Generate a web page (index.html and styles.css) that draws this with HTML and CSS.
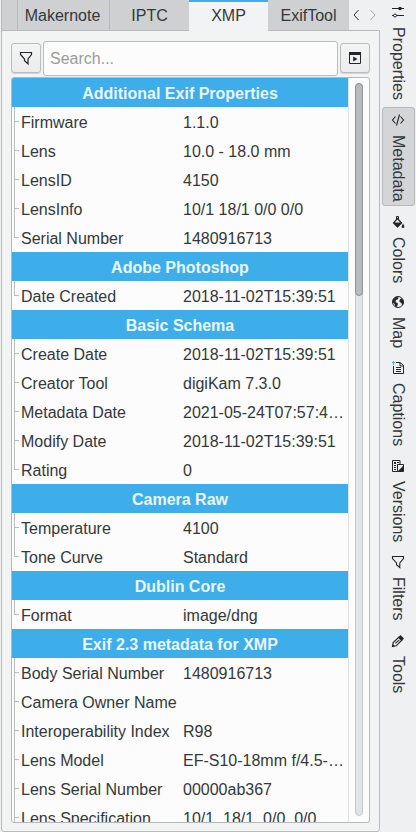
FILE: index.html
```
<!DOCTYPE html>
<html lang="en">
<head>
<meta charset="utf-8">
<title>Metadata</title>
<link rel="stylesheet" href="styles.css">
</head>
<body>
<main class="panel">
  <nav class="tabs">
    <span class="tab stub"></span>
    <span class="tab makernote">Makernote</span>
    <span class="tab iptc">IPTC</span>
    <span class="tab xmp active">XMP</span>
    <span class="tab exiftool">ExifTool</span>
    <span class="arrows">
      <svg width="30" height="14" viewBox="0 0 30 14" fill="none"><path d="M9.500 2 5 7l4.500 5" stroke="#333"/><path d="M21.500 2 26 7l-4.500 5" stroke="#aaa"/></svg>
    </span>
  </nav>
  <section class="page">
    <div class="toolbar">
      <button class="tool"><svg width="16" height="16" viewBox="0 0 16 16" fill="none" stroke="#232629" stroke-width="1.200"><path d="M2.500 2.500h11v2L10 9v5l-3.500-3.200V9L2.500 4.500z"/></svg></button>
      <div class="search">Search...</div>
      <button class="tool"><svg width="14" height="14" viewBox="0 0 14 14"><path d="M1.500 1.500h11v11h-11z" fill="none" stroke="#232629"/><path d="M1 1h12v3H1zM5.200 5.500v5L9.500 8z" fill="#232629"/></svg></button>
    </div>
    <div class="list">
      <div class="rows">
        <h2>Additional Exif Properties</h2>
        <dl>
          <div><dt>Firmware</dt><dd>1.1.0</dd></div>
          <div><dt>Lens</dt><dd>10.0 - 18.0 mm</dd></div>
          <div><dt>LensID</dt><dd>4150</dd></div>
          <div><dt>LensInfo</dt><dd>10/1 18/1 0/0 0/0</dd></div>
          <div><dt>Serial Number</dt><dd>1480916713</dd></div>
        </dl>
        <h2>Adobe Photoshop</h2>
        <dl>
          <div><dt>Date Created</dt><dd>2018-11-02T15:39:51</dd></div>
        </dl>
        <h2>Basic Schema</h2>
        <dl>
          <div><dt>Create Date</dt><dd>2018-11-02T15:39:51</dd></div>
          <div><dt>Creator Tool</dt><dd>digiKam 7.3.0</dd></div>
          <div><dt>Metadata Date</dt><dd>2021-05-24T07:57:4…</dd></div>
          <div><dt>Modify Date</dt><dd>2018-11-02T15:39:51</dd></div>
          <div><dt>Rating</dt><dd>0</dd></div>
        </dl>
        <h2>Camera Raw</h2>
        <dl>
          <div><dt>Temperature</dt><dd>4100</dd></div>
          <div><dt>Tone Curve</dt><dd>Standard</dd></div>
        </dl>
        <h2>Dublin Core</h2>
        <dl>
          <div><dt>Format</dt><dd>image/dng</dd></div>
        </dl>
        <h2>Exif 2.3 metadata for XMP</h2>
        <dl class="continues">
          <div><dt>Body Serial Number</dt><dd>1480916713</dd></div>
          <div><dt>Camera Owner Name</dt><dd></dd></div>
          <div><dt>Interoperability Index</dt><dd>R98</dd></div>
          <div><dt>Lens Model</dt><dd>EF-S10-18mm f/4.5-…</dd></div>
          <div><dt>Lens Serial Number</dt><dd>00000ab367</dd></div>
          <div><dt>Lens Specification</dt><dd>10/1&nbsp; 18/1&nbsp; 0/0&nbsp; 0/0</dd></div>
        </dl>
      </div>
      <div class="scroll"><div class="track"><div class="thumb"></div></div></div>
    </div>
  </section>
</main>
<aside class="side">
  <div class="stab properties"><svg viewBox="0 0 14 14" stroke="#232629"><path d="M1 3.500h12M1 10.500h12"/><circle cx="9" cy="3.500" r="1.800" fill="#232629" stroke="none"/><circle cx="4" cy="10.500" r="1.500" fill="#eff0f1"/></svg><span>Properties</span></div>
  <div class="stab metadata active"><svg viewBox="0 0 14 14" fill="none" stroke="#232629" stroke-width="1.100"><path d="M4.500 3.500 1.500 7l3 3.500M9.500 3.500l3 3.500-3 3.500M8.500 1.500l-3 11"/></svg><span>Metadata</span></div>
  <div class="stab colors"><svg viewBox="0 0 14 14"><path d="M5.500 4.500V1.500h2v3" fill="none" stroke="#232629"/><path d="M6.500 3.500 10.500 8l-4 4-4-4z" fill="none" stroke="#232629" stroke-width="1.200"/><path d="M2 7.500h9l-4.500 5zM12 8.500q2.700 4.500 0 4.500t0-4.500z" fill="#232629"/></svg><span>Colors</span></div>
  <div class="stab map"><svg viewBox="0 0 14 14"><circle cx="7" cy="7" r="5.500" fill="none" stroke="#232629"/><path d="M2 4.500 4.500 2l3 .2-.5 2L5 5l-.5 2L7 8.500l-.8 3L4.500 12 3.500 9 1.500 7zM8.500 5l2-2 2 3v3L11 10.500 10.500 8 8.500 7z" fill="#232629"/></svg><span>Map</span></div>
  <div class="stab captions"><svg viewBox="0 0 14 14" fill="none" stroke="#232629"><path d="M5 1.500h4l3.500 3v8h-10V5M9 1.500V5h3.500" /><path d="M5 6.500h5M5 8.500h5M5 10.500h5"/><path d="M1 1.500h3M2.500 0v4" stroke="#3daee9"/></svg><span>Captions</span></div>
  <div class="stab versions"><svg viewBox="0 0 14 14"><path d="M1.500 1.500h7.500v4M9 5.500h-2.500v7H1.500v-11" fill="none" stroke="#232629"/><path d="M6.500 5.500h6v7h-6z" fill="#eff0f1" stroke="#232629"/><path d="M3 3h2v2H3zM6 3h2v1H6zM3 6h2v1H3zM3 8h2v1H3zM3 10h2v1H3zM7 12l5-5v5z" fill="#232629"/></svg><span>Versions</span></div>
  <div class="stab filters"><svg viewBox="0 0 14 14" fill="none" stroke="#232629" stroke-width="1.100"><path d="M1.500 1.500h11v2L8.800 8v4.500L5.500 9.700V8l-4-4.500z"/></svg><span>Filters</span></div>
  <div class="stab tools"><svg viewBox="0 0 14 14"><path d="m1.500 12.500.7-4L8 3l3 3-5.800 5.800z" fill="none" stroke="#232629" stroke-width="1.200"/><path d="M7 3.500 9.500 1 13 4.500 10.500 7zM1 13l.7-3 2.300 2.300zM4 9l4-3.500.7.7-4 3.500z" fill="#232629"/></svg><span>Tools</span></div>
</aside>
</body>
</html>
```
FILE: styles.css
```
* { box-sizing: border-box; }
html, body { height: 100%; }
body {
  margin: 0;
  display: flex;
  overflow: hidden;
  background: #eff0f1;
  color: #34383b;
  font: 16px/29px "Liberation Sans", Arial, sans-serif;
}
.panel { width: 380px; height: 832px; padding-left: 1px; display: flex; flex-direction: column; }
.tabs { height: 31px; display: flex; flex: none; position: relative; z-index: 1; }
.tab {
  height: 31px;
  line-height: 31px;
  text-align: center;
  background: #ced0d2;
  border-right: 1px solid #b8babc;
  border-bottom: 1px solid #b8babc;
}
.stub { width: 17px; border-left: 1px solid #b8babc; }
.makernote { width: 92px; padding-right: 2px; }
.iptc { width: 79px; border-right: 0; }
.tab.active { width: 79px; background: #f2f3f4; border: 0; border-top: 2px solid #3daee9; line-height: 27px; }
.exiftool { width: 81px; border-right: 0; }
.arrows { flex: 1; padding: 8px 0 0; line-height: 0; overflow: hidden; }
.page {
  flex: none;
  height: 802px;
  width: 379px;
  margin-top: -1px;
  padding: 9px 9px 8px;
  border: 1px solid #b8babc;
  border-radius: 0 0 3px 3px;
  background: #f2f3f3;
}
.toolbar { display: flex; align-items: center; gap: 2px; height: 36px; }
.tool {
  flex: none;
  width: 30px;
  height: 30px;
  padding: 0;
  display: flex;
  align-items: center;
  justify-content: center;
  border: 1px solid #b9bbbd;
  border-radius: 3px;
  background: linear-gradient(#f3f4f4, #ececed);
  box-shadow: 0 1px 0 #d4d5d6;
}
.search {
  flex: 1;
  height: 35px;
  padding-left: 6px;
  line-height: 33px;
  background: #fcfcfc;
  border: 1px solid #b9bbbd;
  border-radius: 3px;
  color: #999b9d;
}
.list {
  display: flex;
  height: 746px;
  width: 359px;
  margin-top: 1px;
  border: 1px solid #b6b8ba;
  border-radius: 3px;
  background: #fcfcfc;
  overflow: hidden;
}
.rows { width: 337px; border-right: 1px solid #e0e1e2; }
h2 {
  margin: 0;
  height: 29px;
  background: #3daee9;
  color: #eaf6fd;
  font-size: 16px;
  line-height: 32px;
  text-align: center;
}
dl { margin: 0; }
dl > div { display: flex; height: 29px; padding-left: 2px; line-height: 32px; white-space: pre; }
dl > div::before {
  content: "";
  width: 4px;
  height: 29px;
  margin-right: 2px;
  border-left: 1px solid #bbbdbf;
  background: linear-gradient(#bbbdbf, #bbbdbf) 0 14px / 4px 1px no-repeat;
}
dl:not(.continues) > div:last-child::before { height: 15px; }
dt { width: 162px; }
dd { margin: 0; }
.scroll { flex: 1; padding: 5px 0 0 6px; }
.track { width: 8px; height: 733px; border: 1px solid #c5c7c8; border-radius: 4px; background: #e3e4e5; }
.thumb { width: 8px; height: 213px; margin: -1px; border: 1px solid #8e9092; border-radius: 4px; background: #b9bbbc; }
.side { width: 36px; padding-left: 2px; margin-top: -1px; }
.stab { width: 33px; padding: 5px 0 0 8px; border: 1px solid transparent; line-height: 0; }
.stab svg { display: block; width: 14px; height: 14px; margin-bottom: 8px; }
.stab span { writing-mode: vertical-rl; line-height: 15px; white-space: nowrap; }
.stab.active { background: #d3d5d6; border-color: #b5b7b9; border-radius: 3px; }
.properties { height: 108px; }
.metadata { height: 99px; margin-bottom: 3px; }
.colors { height: 80px; }
.map { height: 66px; }
.captions { height: 98px; }
.versions { height: 96px; }
.filters { height: 79px; }
```
